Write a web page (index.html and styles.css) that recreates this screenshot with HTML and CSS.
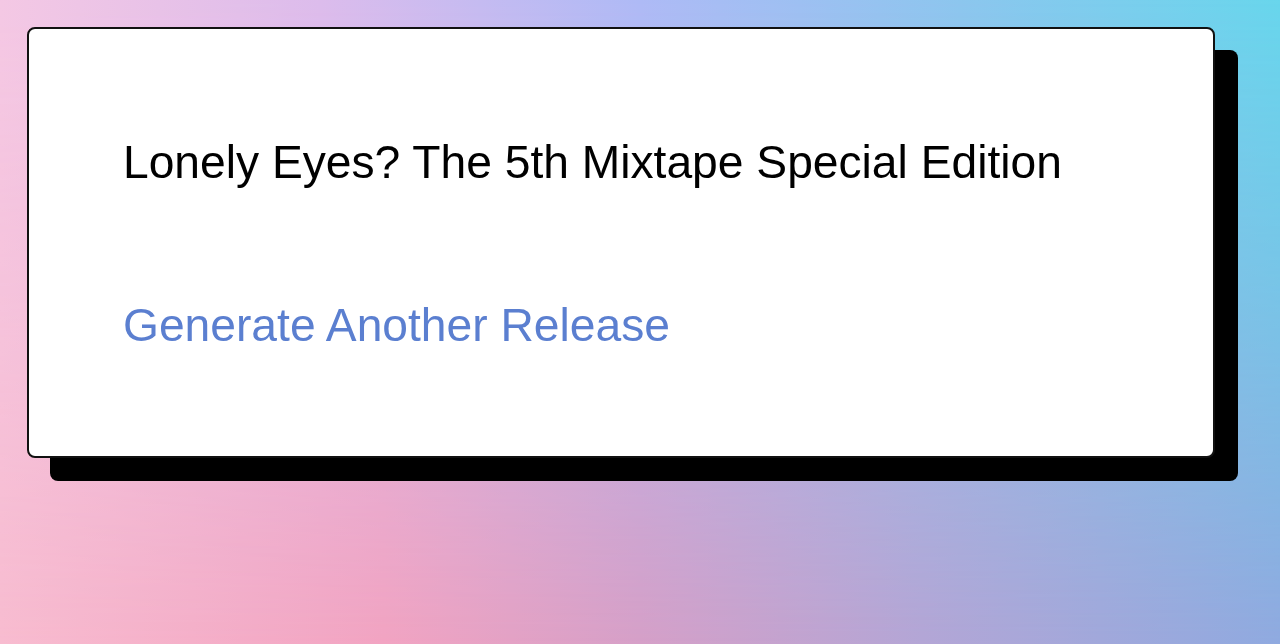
FILE: index.html
```html
<!DOCTYPE html>
<html lang="en">
<head>
<meta charset="utf-8">
<title>Release Generator</title>
<link rel="stylesheet" href="styles.css">
</head>
<body>
<main class="page">
  <section class="card">
    <h1 class="title">Lonely Eyes? The 5th Mixtape Special Edition</h1>
    <a class="link" href="#">Generate Another Release</a>
  </section>
</main>
</body>
</html>
```
FILE: styles.css
```css
html, body {
  margin: 0;
  padding: 0;
  height: 100%;
}
body {
  font-family: "Liberation Sans", Arial, sans-serif;
  background: linear-gradient(to right, #f8bcd0 0%, #f2a4c2 30%, #d6a0c8 50%, #b4a6d6 72%, #90aae0 100%);
  position: relative;
  overflow: hidden;
}
body::before {
  content: "";
  position: fixed;
  inset: 0;
  z-index: -1;
  background: linear-gradient(to right, #f4c8e4 0%, #dcbcec 25%, #aebaf6 50%, #8cc6ee 75%, #68d6ec 100%);
  -webkit-mask-image: linear-gradient(to bottom, #000 0%, rgba(0,0,0,0.6) 45%, transparent 100%);
  mask-image: linear-gradient(to bottom, #000 0%, rgba(0,0,0,0.6) 45%, transparent 100%);
}
.page {
  padding: 27px 65px 0 27px;
  position: relative;
  z-index: 0;
}
.card {
  box-sizing: border-box;
  height: 431px;
  background: #fff;
  border: 2px solid #111;
  border-radius: 8px;
  box-shadow: 23px 23px 0 0 #000;
  padding: 109px 93px 0 94px;
  display: flex;
  flex-direction: column;
  align-items: flex-start;
}
.title {
  margin: 0;
  font-size: 46.2px;
  font-weight: 400;
  color: #000;
  line-height: 48px;
}
.link {
  margin-top: 115px;
  font-size: 46.2px;
  line-height: 48px;
  color: #5b7fd0;
  text-decoration: none;
}
```
